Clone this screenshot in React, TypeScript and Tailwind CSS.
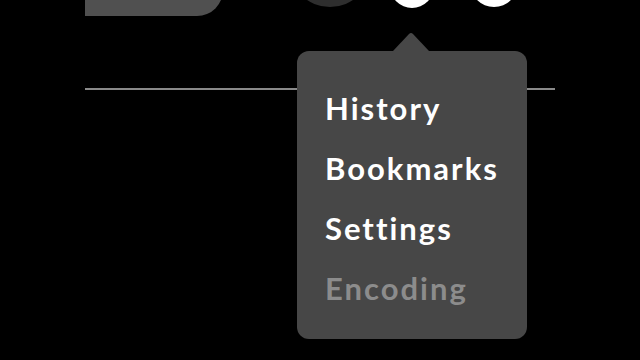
export default function App() {
  const items = [
    { label: 'History', disabled: false },
    { label: 'Bookmarks', disabled: false },
    { label: 'Settings', disabled: false },
    { label: 'Encoding', disabled: true },
  ];

  return (
    <div className="relative w-[640px] h-[360px] overflow-hidden bg-black" style={{ fontFamily: 'Lato, "Open Sans", sans-serif' }}>
      {/* top bar, mostly scrolled out of view */}
      <div className="flex items-end h-[16px]">
        <div className="ml-[85px] w-[138px] h-[40px] -mt-[24px] rounded-br-[26px] bg-[#505050]" />
        <div className="ml-[66px] w-[82px] h-[82px] -mt-[75px] rounded-full bg-[#2e2e2e] self-start" />
        <div className="ml-[19px] w-[44px] h-[44px] -mt-[36px] rounded-full bg-white self-start" />
        <div className="ml-[36px] w-[48px] h-[48px] -mt-[41px] rounded-full bg-white self-start" />
      </div>

      <div className="mt-[72px] mx-[85px] w-[470px] h-[2px] bg-[#8a8a8a]" />

      {/* popup menu */}
      <div className="absolute left-[297px] top-[32px]">
        <svg width="230" height="19" viewBox="0 0 230 19" className="block">
          <path d="M96 19 L112 2 Q114 0 116 2 L132 19 Z" fill="#474747" />
        </svg>
        <div className="w-[230px] h-[288px] rounded-[12px] bg-[#474747] pl-[28px] pt-[38px] flex flex-col gap-[22px]">
          {items.map(item => (
            <div
              key={item.label}
              className={`text-[31px] leading-[38px] font-bold tracking-[2px] ${item.disabled ? 'text-[#8c8c8c]' : 'text-white'}`}
            >
              {item.label}
            </div>
          ))}
        </div>
      </div>
    </div>
  );
}
